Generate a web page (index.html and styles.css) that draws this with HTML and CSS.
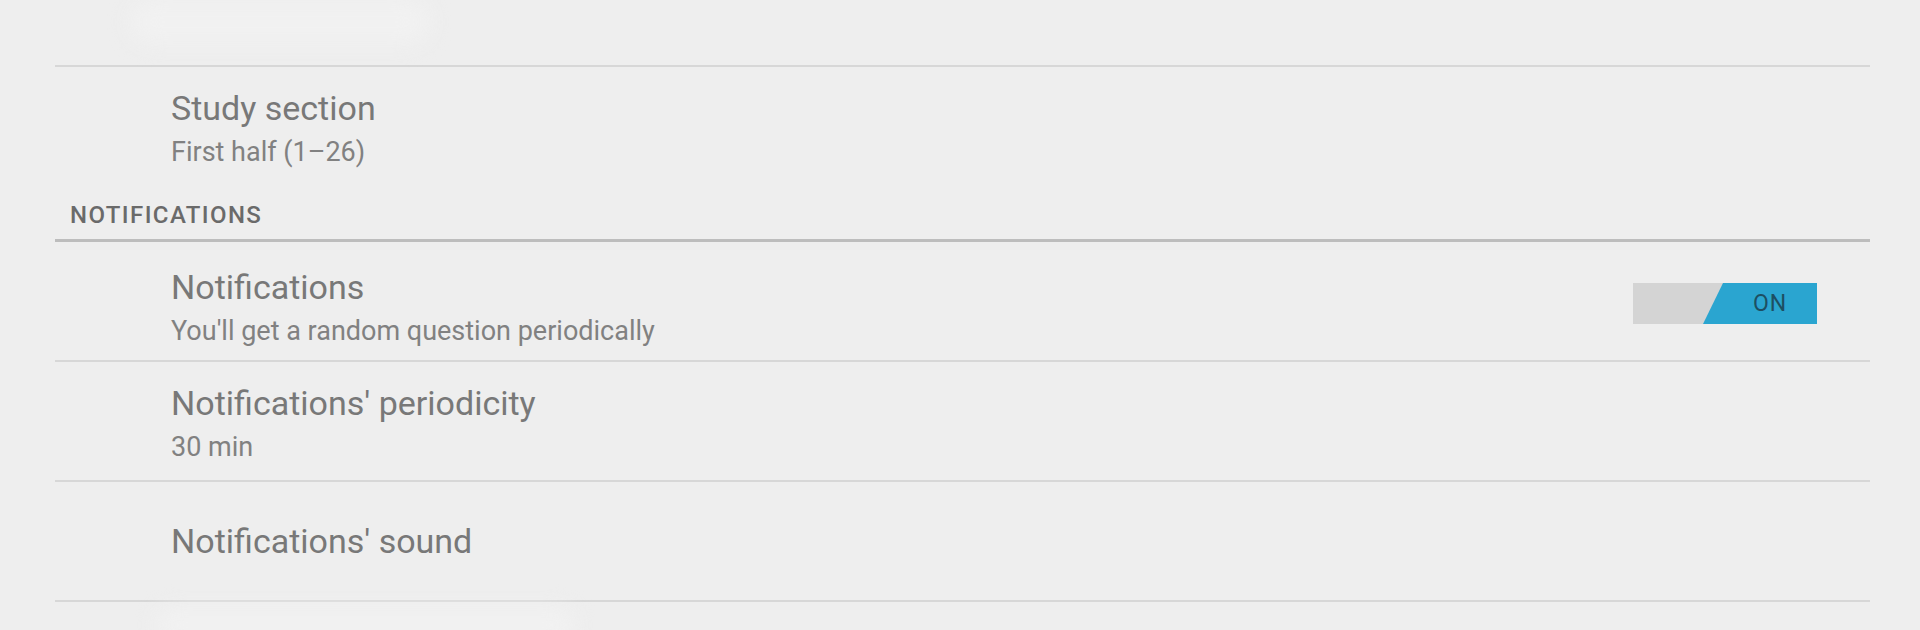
FILE: index.html
```html
<!DOCTYPE html>
<html lang="en">
<head>
  <meta charset="UTF-8" />
  <meta name="viewport" content="width=device-width, initial-scale=1.0" />
  <title>Settings</title>
  <link rel="stylesheet" href="styles.css">
</head>
<body>
  <div class="settings">
    <div class="fade-top">
      <div class="ghost"></div>
    </div>

    <div class="pref">
      <div class="pref-text two-line">
        <div class="pref-title">Study section</div>
        <div class="pref-summary">First half (1–26)</div>
      </div>
    </div>

    <div class="category">NOTIFICATIONS</div>

    <div class="pref pref-switch">
      <div class="pref-text two-line">
        <div class="pref-title">Notifications</div>
        <div class="pref-summary">You'll get a random question periodically</div>
      </div>
      <div class="switch" onclick="toggleSwitch(this)">
        <div class="switch-thumb"><span id="switchLabel">ON</span></div>
      </div>
    </div>

    <div class="pref">
      <div class="pref-text two-line">
        <div class="pref-title">Notifications' periodicity</div>
        <div class="pref-summary">30 min</div>
      </div>
    </div>

    <div class="pref">
      <div class="pref-text">
        <div class="pref-title">Notifications' sound</div>
      </div>
    </div>

    <div class="fade-bottom">
      <div class="ghost ghost-wide"></div>
    </div>
  </div>

  <script>
    function toggleSwitch(el) {
      el.classList.toggle("off");
      document.getElementById("switchLabel").innerText =
        el.classList.contains("off") ? "OFF" : "ON";
    }
  </script>
</body>
</html>
```

FILE: styles.css
```css
:root {
  --bg: #eeeeee;
  --title: #787878;
  --summary: #818181;
  --divider: #d7d7d7;
  --category-line: #bdbdbd;
  --accent: #2aa5d0;
}

body {
  margin: 0;
  background-color: var(--bg);
  font-family: Roboto, "Liberation Sans", sans-serif;
  overflow: hidden;
}

.settings {
  display: flex;
  flex-direction: column;
  padding: 0 50px 0 55px;
}

.fade-top {
  height: 65px;
  border-bottom: 2px solid var(--divider);
  box-sizing: content-box;
}

.ghost {
  width: 300px;
  height: 44px;
  margin-left: 75px;
  border-radius: 24px;
  background-color: #f1f1f1;
  filter: blur(10px);
}

.ghost-wide {
  width: 420px;
  height: 34px;
  margin: 6px 0 0 100px;
}

.pref {
  display: flex;
  align-items: center;
  height: 118px;
  padding-left: 116px;
  padding-right: 53px;
  border-bottom: 2px solid var(--divider);
}

.pref-text {
  flex: 1;
  display: flex;
  flex-direction: column;
}

.pref-text.two-line {
  padding-top: 6px;
}

.pref-switch .pref-text.two-line {
  padding-top: 14px;
}

.pref-title {
  font-size: 34px;
  line-height: 40px;
  color: var(--title);
}

.pref-summary {
  margin-top: 6px;
  font-size: 27px;
  line-height: 36px;
  color: var(--summary);
}

.category {
  padding: 16px 0 10px 15px;
  font-size: 24px;
  line-height: 28px;
  font-weight: 500;
  letter-spacing: 1.4px;
  color: #6a6a6a;
  border-bottom: 3px solid var(--category-line);
}

.pref:has(+ .category) {
  border-bottom: none;
}

.switch {
  display: flex;
  width: 184px;
  height: 41px;
  margin-top: 5px;
  background-color: #d4d4d4;
  cursor: pointer;
}

.switch-thumb {
  display: flex;
  align-items: center;
  justify-content: center;
  width: 114px;
  margin-left: auto;
  padding-left: 20px;
  box-sizing: border-box;
  background-color: var(--accent);
  clip-path: polygon(20px 0, 100% 0, 100% 100%, 0 100%);
  font-size: 23px;
  letter-spacing: 1px;
  color: #1d4f62;
}

.switch.off .switch-thumb {
  margin-left: 0;
  margin-right: auto;
  background-color: #b5b5b5;
  clip-path: polygon(0 0, 100% 0, calc(100% - 20px) 100%, 0 100%);
  padding: 0 20px 0 0;
}

.fade-bottom {
  height: 30px;
}
```
